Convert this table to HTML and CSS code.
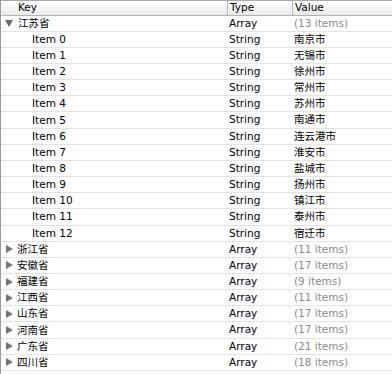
FILE: index.html
```html
<!DOCTYPE html>
<html>
<head>
<meta charset="utf-8">
<link rel="stylesheet" href="styles.css">
</head>
<body>
<div class="table">
  <div class="head">
    <div class="c key"><span class="htext">Key</span></div>
    <div class="c type"><span class="htext">Type</span></div>
    <div class="c val"><span class="htext">Value</span></div>
  </div>
  <div class="row"><div class="c key"><span class="tri open"></span>江苏省</div><div class="c type">Array</div><div class="c val dim">(13 items)</div></div>
  <div class="row"><div class="c key child">Item 0</div><div class="c type">String</div><div class="c val">南京市</div></div>
  <div class="row"><div class="c key child">Item 1</div><div class="c type">String</div><div class="c val">无锡市</div></div>
  <div class="row"><div class="c key child">Item 2</div><div class="c type">String</div><div class="c val">徐州市</div></div>
  <div class="row"><div class="c key child">Item 3</div><div class="c type">String</div><div class="c val">常州市</div></div>
  <div class="row"><div class="c key child">Item 4</div><div class="c type">String</div><div class="c val">苏州市</div></div>
  <div class="row"><div class="c key child">Item 5</div><div class="c type">String</div><div class="c val">南通市</div></div>
  <div class="row"><div class="c key child">Item 6</div><div class="c type">String</div><div class="c val">连云港市</div></div>
  <div class="row"><div class="c key child">Item 7</div><div class="c type">String</div><div class="c val">淮安市</div></div>
  <div class="row"><div class="c key child">Item 8</div><div class="c type">String</div><div class="c val">盐城市</div></div>
  <div class="row"><div class="c key child">Item 9</div><div class="c type">String</div><div class="c val">扬州市</div></div>
  <div class="row"><div class="c key child">Item 10</div><div class="c type">String</div><div class="c val">镇江市</div></div>
  <div class="row"><div class="c key child">Item 11</div><div class="c type">String</div><div class="c val">泰州市</div></div>
  <div class="row"><div class="c key child">Item 12</div><div class="c type">String</div><div class="c val">宿迁市</div></div>
  <div class="row"><div class="c key"><span class="tri"></span>浙江省</div><div class="c type">Array</div><div class="c val dim">(11 items)</div></div>
  <div class="row"><div class="c key"><span class="tri"></span>安徽省</div><div class="c type">Array</div><div class="c val dim">(17 items)</div></div>
  <div class="row"><div class="c key"><span class="tri"></span>福建省</div><div class="c type">Array</div><div class="c val dim">(9 items)</div></div>
  <div class="row"><div class="c key"><span class="tri"></span>江西省</div><div class="c type">Array</div><div class="c val dim">(11 items)</div></div>
  <div class="row"><div class="c key"><span class="tri"></span>山东省</div><div class="c type">Array</div><div class="c val dim">(17 items)</div></div>
  <div class="row"><div class="c key"><span class="tri"></span>河南省</div><div class="c type">Array</div><div class="c val dim">(17 items)</div></div>
  <div class="row"><div class="c key"><span class="tri"></span>广东省</div><div class="c type">Array</div><div class="c val dim">(21 items)</div></div>
  <div class="row"><div class="c key"><span class="tri"></span>四川省</div><div class="c type">Array</div><div class="c val dim">(18 items)</div></div>
</div>
</body>
</html>
```
FILE: styles.css
```css
html, body {
  margin: 0;
  padding: 0;
  background: #fff;
}
body {
  font-family: "DejaVu Sans", "Noto Sans CJK SC", sans-serif;
  font-size: 10.5px;
  color: #000;
}
.table {
  width: 392px;
  height: 374px;
  box-sizing: border-box;
  border-left: 1px solid #9a9a9a;
  overflow: hidden;
}
.head {
  display: flex;
  height: 13.5px;
  border-top: 1px solid #a8a8a8;
  border-bottom: 1px solid #b4b4b4;
  background: linear-gradient(#ffffff, #e9e9e9);
}
.head .c {
  line-height: 13px;
}
.head .type, .head .val {
  border-left: 1px solid #b8b8b8;
}
.htext {
  display: block;
}
.row {
  display: flex;
  height: 15.17px;
  border-bottom: 1px solid #e3e3e3;
}
.c {
  line-height: 15px;
  white-space: nowrap;
  overflow: hidden;
  box-sizing: border-box;
}
.key {
  width: 226px;
  padding-left: 4px;
  display: flex;
  align-items: center;
}
.head .key {
  padding-left: 17px;
}
.key.child {
  padding-left: 31px;
}
.type {
  width: 65px;
  padding-left: 2px;
}
.val {
  flex: 1;
  padding-left: 2px;
}
.row .type { padding-left: 2px; }
.row .val { padding-left: 2px; }
.dim {
  color: #8a8a8a;
}
.tri {
  width: 0;
  height: 0;
  margin-right: 4px;
  border-top: 4px solid transparent;
  border-bottom: 4px solid transparent;
  border-left: 7px solid #777;
  margin-left: 1px;
}
.tri.open {
  border-left: 4px solid transparent;
  border-right: 4px solid transparent;
  border-top: 7px solid #6a6a6a;
  border-bottom: 0;
  margin-left: 0;
  margin-right: 5px;
}
```
